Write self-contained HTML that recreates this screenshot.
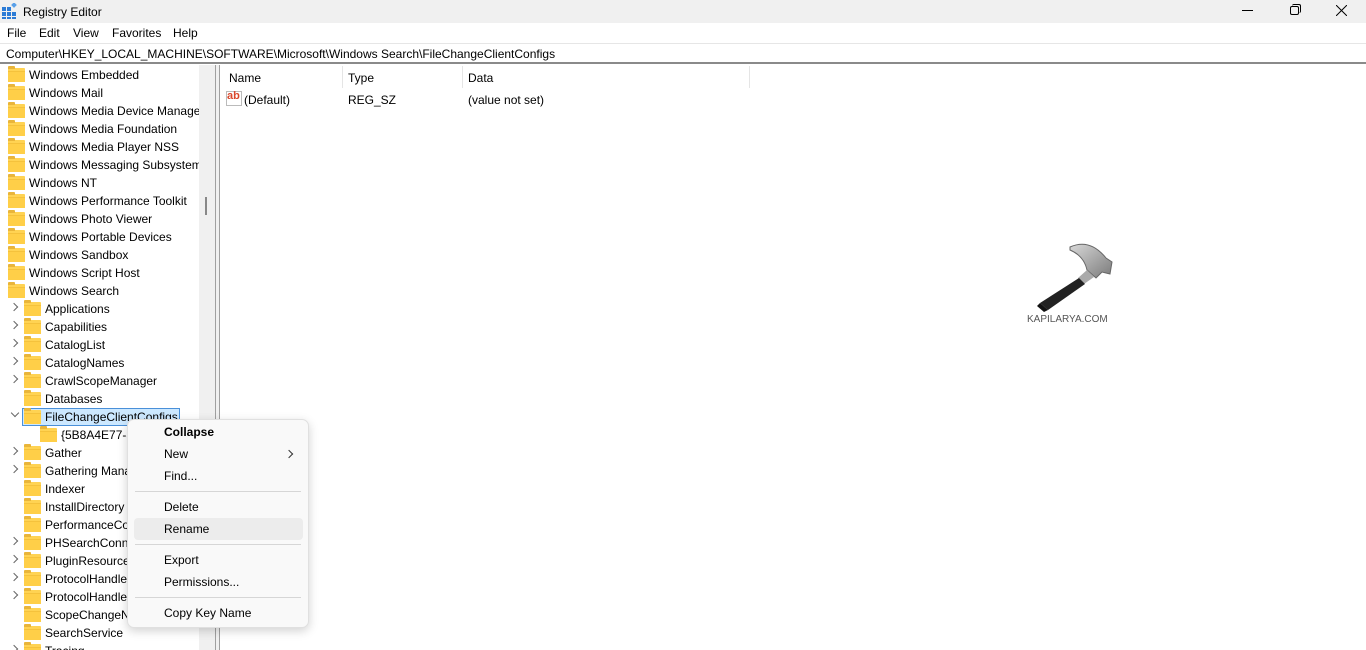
<!DOCTYPE html>
<html><head><meta charset="utf-8"><style>
*{margin:0;padding:0;box-sizing:border-box}
body{width:1366px;height:650px;overflow:hidden;background:#fff;font-family:"Liberation Sans",sans-serif;font-size:12px;color:#000;position:relative}
.abs{position:absolute}
.title{left:0;top:0;width:1366px;height:23px;background:#f0f0f0}
.menu span{position:absolute;top:26px}
.addr{left:0;top:43px;width:1366px;height:21px;background:#fff;border-top:1px solid #e6e6e6;border-bottom:2px solid #8a8a8a}
.tree{left:0;top:66px;width:199px;height:584px;overflow:hidden}
.row{position:absolute;height:18px;white-space:nowrap}
.row .t{position:absolute;top:2px}
.fold{position:absolute;top:2px;width:17px;height:13px;background:#ffd353;border-radius:1px}
.fold:before{content:"";position:absolute;left:0;top:-2px;width:7px;height:3px;background:#e9b53a;border-radius:1px 1px 0 0}
.fold:after{content:"";position:absolute;left:0;top:3px;width:17px;height:10px;background:#ffcf48;border-top:1px solid #f5c23c}
.arr{position:absolute;top:4px;width:6px;height:6px;border-right:1.3px solid #666;border-bottom:1.3px solid #666;transform:rotate(-45deg)}
.sb{left:199px;top:65px;width:16px;height:585px;background:#f0f0f0}
.split{left:215px;top:65px;width:5px;height:585px;border-left:1px solid #a0a0a0;border-right:1px solid #a0a0a0;background:#f0f0f0}
.ctx{left:127px;top:419px;width:182px;height:209px;background:#f9f9f9;border:1px solid #e0e0e0;border-radius:7px;box-shadow:0 3px 10px rgba(0,0,0,.18)}
.ctx span{position:absolute;left:36px}
.sep{position:absolute;left:7px;width:166px;height:1px;background:#d6d6d6}
</style></head><body>
<div class="abs title"></div>
<svg class="abs" style="left:2px;top:3px" width="16" height="16"><g fill="#2b7bd6"><rect x="0" y="4" width="4" height="4"/><rect x="5" y="4" width="4" height="4"/><rect x="0" y="9" width="4" height="4"/><rect x="5" y="9" width="4" height="4"/><rect x="10" y="9" width="4" height="4"/><rect x="0" y="14" width="4" height="2"/><rect x="5" y="14" width="4" height="2"/><rect x="10" y="14" width="4" height="2"/></g><rect x="10" y="0" width="4" height="4" fill="#5aa0e8" transform="rotate(45 12 2)"/></svg>
<div class="abs" style="left:23px;top:5px">Registry Editor</div>
<div class="abs" style="left:1242px;top:10px;width:11px;height:1px;background:#000"></div>
<div class="abs" style="left:1290px;top:6px;width:9px;height:9px;border:1px solid #000;border-radius:2px;background:#f0f0f0"></div>
<div class="abs" style="left:1292px;top:4px;width:9px;height:9px;border-top:1px solid #000;border-right:1px solid #000;border-radius:2px"></div>
<svg class="abs" style="left:1336px;top:5px" width="11" height="11"><path d="M0 0L11 11M11 0L0 11" stroke="#000" stroke-width="1"/></svg>
<div class="menu"><span style="left:7px">File</span><span style="left:39px">Edit</span><span style="left:73px">View</span><span style="left:112px">Favorites</span><span style="left:173px">Help</span></div>
<div class="abs addr"><div style="position:absolute;left:6px;top:3px">Computer\HKEY_LOCAL_MACHINE\SOFTWARE\Microsoft\Windows Search\FileChangeClientConfigs</div></div>
<div class="abs tree">
<div class="row" style="top:0"><div class="fold" style="left:8px"></div><span class="t" style="left:29px">Windows Embedded</span></div>
<div class="row" style="top:18px"><div class="fold" style="left:8px"></div><span class="t" style="left:29px">Windows Mail</span></div>
<div class="row" style="top:36px"><div class="fold" style="left:8px"></div><span class="t" style="left:29px">Windows Media Device Manager</span></div>
<div class="row" style="top:54px"><div class="fold" style="left:8px"></div><span class="t" style="left:29px">Windows Media Foundation</span></div>
<div class="row" style="top:72px"><div class="fold" style="left:8px"></div><span class="t" style="left:29px">Windows Media Player NSS</span></div>
<div class="row" style="top:90px"><div class="fold" style="left:8px"></div><span class="t" style="left:29px">Windows Messaging Subsystem</span></div>
<div class="row" style="top:108px"><div class="fold" style="left:8px"></div><span class="t" style="left:29px">Windows NT</span></div>
<div class="row" style="top:126px"><div class="fold" style="left:8px"></div><span class="t" style="left:29px">Windows Performance Toolkit</span></div>
<div class="row" style="top:144px"><div class="fold" style="left:8px"></div><span class="t" style="left:29px">Windows Photo Viewer</span></div>
<div class="row" style="top:162px"><div class="fold" style="left:8px"></div><span class="t" style="left:29px">Windows Portable Devices</span></div>
<div class="row" style="top:180px"><div class="fold" style="left:8px"></div><span class="t" style="left:29px">Windows Sandbox</span></div>
<div class="row" style="top:198px"><div class="fold" style="left:8px"></div><span class="t" style="left:29px">Windows Script Host</span></div>
<div class="row" style="top:216px"><div class="fold" style="left:8px"></div><span class="t" style="left:29px">Windows Search</span></div>
<div class="row" style="top:234px"><div class="arr" style="left:11px"></div><div class="fold" style="left:24px"></div><span class="t" style="left:45px">Applications</span></div>
<div class="row" style="top:252px"><div class="arr" style="left:11px"></div><div class="fold" style="left:24px"></div><span class="t" style="left:45px">Capabilities</span></div>
<div class="row" style="top:270px"><div class="arr" style="left:11px"></div><div class="fold" style="left:24px"></div><span class="t" style="left:45px">CatalogList</span></div>
<div class="row" style="top:288px"><div class="arr" style="left:11px"></div><div class="fold" style="left:24px"></div><span class="t" style="left:45px">CatalogNames</span></div>
<div class="row" style="top:306px"><div class="arr" style="left:11px"></div><div class="fold" style="left:24px"></div><span class="t" style="left:45px">CrawlScopeManager</span></div>
<div class="row" style="top:324px"><div class="fold" style="left:24px"></div><span class="t" style="left:45px">Databases</span></div>
<div class="row" style="top:342px"><div class="arr" style="left:12px;top:2px;transform:rotate(45deg)"></div><div style="position:absolute;left:22px;top:0;width:158px;height:18px;background:#cce8ff;border:1px solid #4a90d9"></div><div class="fold" style="left:24px"></div><span class="t" style="left:45px">FileChangeClientConfigs</span></div>
<div class="row" style="top:360px"><div class="fold" style="left:40px"></div><span class="t" style="left:61px">{5B8A4E77-3A3A-4D1B}</span></div>
<div class="row" style="top:378px"><div class="arr" style="left:11px"></div><div class="fold" style="left:24px"></div><span class="t" style="left:45px">Gather</span></div>
<div class="row" style="top:396px"><div class="arr" style="left:11px"></div><div class="fold" style="left:24px"></div><span class="t" style="left:45px">Gathering Manager</span></div>
<div class="row" style="top:414px"><div class="fold" style="left:24px"></div><span class="t" style="left:45px">Indexer</span></div>
<div class="row" style="top:432px"><div class="fold" style="left:24px"></div><span class="t" style="left:45px">InstallDirectory</span></div>
<div class="row" style="top:450px"><div class="fold" style="left:24px"></div><span class="t" style="left:45px">PerformanceCounters</span></div>
<div class="row" style="top:468px"><div class="arr" style="left:11px"></div><div class="fold" style="left:24px"></div><span class="t" style="left:45px">PHSearchConnectors</span></div>
<div class="row" style="top:486px"><div class="arr" style="left:11px"></div><div class="fold" style="left:24px"></div><span class="t" style="left:45px">PluginResourceData</span></div>
<div class="row" style="top:504px"><div class="arr" style="left:11px"></div><div class="fold" style="left:24px"></div><span class="t" style="left:45px">ProtocolHandlers</span></div>
<div class="row" style="top:522px"><div class="arr" style="left:11px"></div><div class="fold" style="left:24px"></div><span class="t" style="left:45px">ProtocolHandlers</span></div>
<div class="row" style="top:540px"><div class="fold" style="left:24px"></div><span class="t" style="left:45px">ScopeChangeNotify</span></div>
<div class="row" style="top:558px"><div class="fold" style="left:24px"></div><span class="t" style="left:45px">SearchService</span></div>
<div class="row" style="top:576px"><div class="arr" style="left:11px"></div><div class="fold" style="left:24px"></div><span class="t" style="left:45px">Tracing</span></div>
</div>
<div class="abs sb"><div style="position:absolute;left:6px;top:132px;width:2px;height:18px;background:#888"></div></div>
<div class="abs split"></div>
<div class="abs" style="left:229px;top:71px">Name</div>
<div class="abs" style="left:348px;top:71px">Type</div>
<div class="abs" style="left:468px;top:71px">Data</div>
<div class="abs" style="left:342px;top:66px;width:1px;height:22px;background:#e5e5e5"></div>
<div class="abs" style="left:462px;top:66px;width:1px;height:22px;background:#e5e5e5"></div>
<div class="abs" style="left:749px;top:66px;width:1px;height:22px;background:#e5e5e5"></div>
<div class="abs" style="left:226px;top:91px;width:16px;height:15px;border:1px solid #bbb;background:#fff"></div>
<div class="abs" style="left:227px;top:90px;color:#d9472b;font-weight:bold;font-size:11px">ab</div>
<div class="abs" style="left:244px;top:93px">(Default)</div>
<div class="abs" style="left:348px;top:93px">REG_SZ</div>
<div class="abs" style="left:468px;top:93px">(value not set)</div>
<svg class="abs" style="left:1032px;top:238px" width="86" height="76"><defs><linearGradient id="g" x1="0" y1="0" x2="1" y2="1"><stop offset="0" stop-color="#d8d8d8"/><stop offset="1" stop-color="#7a7a7a"/></linearGradient></defs><path d="M38 9 Q58 0 74 20 L80 24 L78 36 L70 34 L64 40 L55 32 Q52 18 38 12Z" fill="url(#g)" stroke="#666" stroke-width="1"/><path d="M55 32 L62 39 L52 46 L46 40Z" fill="#aaa"/><path d="M47 40 L53 46 L16 72 L8 65Z" fill="#222"/><path d="M8 65 L16 72 L12 74 L5 68Z" fill="#111"/></svg>
<div class="abs" style="left:1027px;top:314px;font-size:10px;color:#555">KAPILARYA.COM</div>
<div class="abs ctx">
<span style="top:5px;font-weight:bold">Collapse</span>
<span style="top:27px">New</span>
<div style="position:absolute;left:158px;top:31px;width:6px;height:6px;border-right:1.3px solid #333;border-bottom:1.3px solid #333;transform:rotate(-45deg)"></div>
<span style="top:49px">Find...</span>
<div class="sep" style="top:71px"></div>
<span style="top:80px">Delete</span>
<div style="position:absolute;left:6px;top:98px;width:169px;height:22px;background:#ececec;border-radius:4px"></div>
<span style="top:102px">Rename</span>
<div class="sep" style="top:124px"></div>
<span style="top:133px">Export</span>
<span style="top:155px">Permissions...</span>
<div class="sep" style="top:177px"></div>
<span style="top:186px">Copy Key Name</span>
</div>
</body></html>
